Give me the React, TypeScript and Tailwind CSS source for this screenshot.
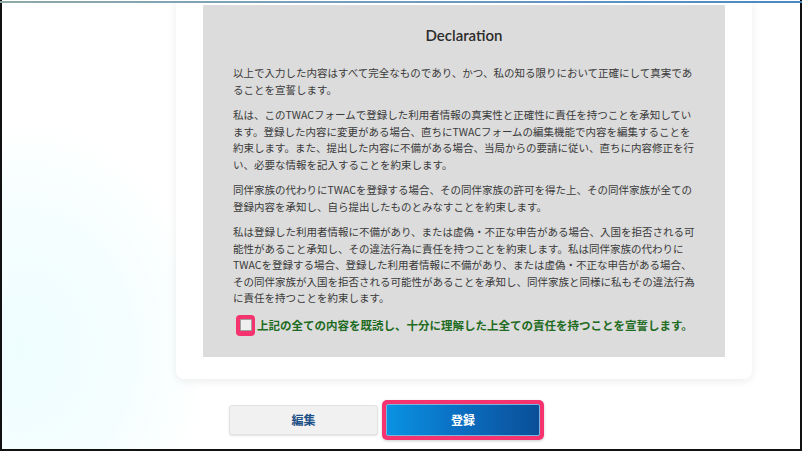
import React from "react";

const jp = { fontFamily: '"Noto Sans CJK JP", "Noto Sans", sans-serif' } as const;

const paragraphs: string[][] = [
  [
    "以上で入力した内容はすべて完全なものであり、かつ、私の知る限りにおいて正確にして真実であ",
    "ることを宣誓します。",
  ],
  [
    "私は、このTWACフォームで登録した利用者情報の真実性と正確性に責任を持つことを承知してい",
    "ます。登録した内容に変更がある場合、直ちにTWACフォームの編集機能で内容を編集することを",
    "約束します。また、提出した内容に不備がある場合、当局からの要請に従い、直ちに内容修正を行",
    "い、必要な情報を記入することを約束します。",
  ],
  [
    "同伴家族の代わりにTWACを登録する場合、その同伴家族の許可を得た上、その同伴家族が全ての",
    "登録内容を承知し、自ら提出したものとみなすことを約束します。",
  ],
  [
    "私は登録した利用者情報に不備があり、または虚偽・不正な申告がある場合、入国を拒否される可",
    "能性があること承知し、その違法行為に責任を持つことを約束します。私は同伴家族の代わりに",
    "TWACを登録する場合、登録した利用者情報に不備があり、または虚偽・不正な申告がある場合、",
    "その同伴家族が入国を拒否される可能性があることを承知し、同伴家族と同様に私もその違法行為",
    "に責任を持つことを約束します。",
  ],
];

export default function App() {
  return (
    <div className="relative w-[802px] h-[451px] overflow-hidden bg-white">
      {/* faint glow */}
      <div className="absolute left-[-170px] top-[120px] w-[380px] h-[460px] rounded-full bg-[radial-gradient(closest-side,#eefdfe,#f5feff_60%,rgba(255,255,255,0))]" />
      {/* frame */}
      <div className="absolute inset-0 border-l-2 border-r-2 border-b-2 border-[#111] pointer-events-none z-20" />
      <div className="absolute left-0 right-0 top-[1px] h-[2px] bg-gradient-to-r from-[#8fa8a8] via-[#6f9cc0] to-[#4a88c2] z-20" />

      <div className="relative z-10 flex flex-col">
        {/* card */}
        <div className="ml-[176px] w-[576px] h-[379px] bg-white rounded-b-[8px] shadow-[0_2px_10px_rgba(0,0,0,0.08)] pt-[5px] px-[27px]">
          <div className="bg-[#dcdcdc] w-[522px] h-[352px] pt-[20px] px-[30px]" style={jp}>
            <h2
              className="text-center text-[15px] font-semibold text-[#2b2b2b] leading-[20px] mb-[20px]"
              style={{ fontFamily: 'Lato, "Open Sans", sans-serif' }}
            >
              Declaration
            </h2>
            <div className="text-[10.5px] leading-[16.5px] text-[#3a3a3a] flex flex-col gap-[9px]">
              {paragraphs.map((lines, i) => (
                <p key={i} className="flex flex-col">
                  {lines.map((l, j) => (
                    <span key={j} className="whitespace-nowrap">
                      {l}
                    </span>
                  ))}
                </p>
              ))}
            </div>
            <div className="flex items-center mt-[8px] ml-[3px]">
              <div className="w-[19px] h-[21px] rounded-[4px] bg-[#f5336f] flex items-center justify-center shrink-0">
                <div className="w-[12px] h-[12px] bg-[#efefef] border border-[#a0a0a0] rounded-[1px]" />
              </div>
              <span className="ml-[2px] text-[11.5px] font-bold text-[#1f6b1f] leading-[20px] whitespace-nowrap">
                上記の全ての内容を既読し、十分に理解した上全ての責任を持つことを宣誓します。
              </span>
            </div>
          </div>
        </div>

        {/* buttons */}
        <div className="flex items-center ml-[229px] mt-[21px] gap-[4px]" style={jp}>
          <button className="w-[149px] h-[30px] rounded-[3px] bg-[#f1f1f1] border border-[#e2e2e2] shadow-[0_1px_2px_rgba(0,0,0,0.12)] text-[12px] font-bold text-[#1d4f86]">
            編集
          </button>
          <div className="p-[4px] rounded-[5px] bg-[#f5336f] shadow-[0_1px_3px_rgba(0,0,0,0.2)]">
            <button className="w-[154px] h-[32px] rounded-[2px] bg-gradient-to-r from-[#0a92e2] via-[#0b6dc0] to-[#0a4f98] border border-[#7ab4dc] text-[12px] font-bold text-white">
              登録
            </button>
          </div>
        </div>
      </div>
    </div>
  );
}
